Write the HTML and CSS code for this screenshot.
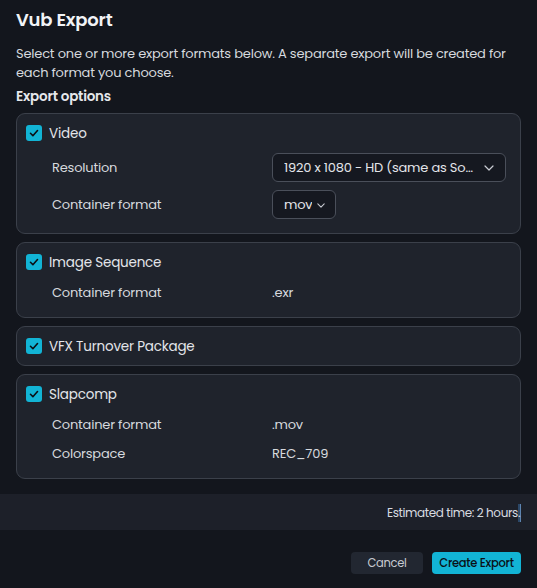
FILE: index.html
```html
<!DOCTYPE html>
<html lang="en">

<head>
    <meta charset="UTF-8">
    <meta name="viewport" content="width=device-width, initial-scale=1.0">
    <title>Vub Export</title>
    <link rel="stylesheet" href="styles.css">
</head>

<body>
    <div class="dialog">
        <div class="dialog-body">
            <h1 class="title">Vub Export</h1>
            <p class="intro">Select one or more export formats below. A separate export will be created for each format you choose.</p>
            <h2 class="section-title">Export options</h2>

            <div class="option-list">
                <div class="option">
                    <label class="option-head">
                        <span class="check">
                            <svg viewBox="0 0 16 16" width="16" height="16"><path d="M4.5 8.3l2.4 2.4 4.6-5.2" fill="none" stroke="#0b0f14" stroke-width="1.6" stroke-linecap="round" stroke-linejoin="round"/></svg>
                        </span>
                        <span class="option-name">Video</span>
                    </label>
                    <div class="option-rows">
                        <span class="row-label">Resolution</span>
                        <div class="select wide">
                            <span class="select-text">1920 x 1080 - HD (same as Source)</span>
                            <svg class="chevron" viewBox="0 0 10 6" width="10" height="6"><path d="M1 1l4 4 4-4" fill="none" stroke="#c9ccd3" stroke-width="1.2" stroke-linecap="round" stroke-linejoin="round"/></svg>
                        </div>
                        <span class="row-label">Container format</span>
                        <div class="select">
                            <span class="select-text">mov</span>
                            <svg class="chevron" viewBox="0 0 10 6" width="8" height="5"><path d="M1 1l4 4 4-4" fill="none" stroke="#c9ccd3" stroke-width="1.3" stroke-linecap="round" stroke-linejoin="round"/></svg>
                        </div>
                    </div>
                </div>

                <div class="option">
                    <label class="option-head">
                        <span class="check">
                            <svg viewBox="0 0 16 16" width="16" height="16"><path d="M4.5 8.3l2.4 2.4 4.6-5.2" fill="none" stroke="#0b0f14" stroke-width="1.6" stroke-linecap="round" stroke-linejoin="round"/></svg>
                        </span>
                        <span class="option-name">Image Sequence</span>
                    </label>
                    <div class="option-rows">
                        <span class="row-label">Container format</span>
                        <span class="row-value">.exr</span>
                    </div>
                </div>

                <div class="option">
                    <label class="option-head">
                        <span class="check">
                            <svg viewBox="0 0 16 16" width="16" height="16"><path d="M4.5 8.3l2.4 2.4 4.6-5.2" fill="none" stroke="#0b0f14" stroke-width="1.6" stroke-linecap="round" stroke-linejoin="round"/></svg>
                        </span>
                        <span class="option-name">VFX Turnover Package</span>
                    </label>
                </div>

                <div class="option">
                    <label class="option-head">
                        <span class="check">
                            <svg viewBox="0 0 16 16" width="16" height="16"><path d="M4.5 8.3l2.4 2.4 4.6-5.2" fill="none" stroke="#0b0f14" stroke-width="1.6" stroke-linecap="round" stroke-linejoin="round"/></svg>
                        </span>
                        <span class="option-name">Slapcomp</span>
                    </label>
                    <div class="option-rows">
                        <span class="row-label">Container format</span>
                        <span class="row-value">.mov</span>
                        <span class="row-label">Colorspace</span>
                        <span class="row-value">REC_709</span>
                    </div>
                </div>
            </div>
        </div>

        <div class="estimate">Estimated time: 2 hours<span class="caret">.</span></div>

        <div class="actions">
            <button class="btn btn-cancel">Cancel</button>
            <button class="btn btn-primary">Create Export</button>
        </div>
    </div>
</body>

</html>
```

FILE: styles.css
```css
* {
    padding: 0;
    margin: 0;
    box-sizing: border-box;
}

body {
    background: #13161d;
    color: #d3d6dc;
    font-family: "Poppins", "Inter", "Noto Sans", sans-serif;
    font-size: 13px;
    letter-spacing: -0.2px;
}

.dialog-body {
    padding: 8px 16px 0;
}

.title {
    font-size: 18px;
    line-height: 24px;
    font-weight: 600;
    letter-spacing: -0.2px;
    color: #f1f3f6;
}

.intro {
    margin-top: 12px;
    line-height: 19px;
    color: #d6d9de;
}

.section-title {
    margin-top: 5px;
    font-size: 13.5px;
    line-height: 20px;
    font-weight: 600;
    color: #e6e8ec;
}

.option-list {
    margin-top: 6px;
    display: flex;
    flex-direction: column;
    gap: 8px;
}

.option {
    background: #1f232c;
    border: 1px solid #3b404a;
    border-radius: 9px;
    padding: 9px 14px 9px 9px;
}

.option-head {
    display: flex;
    align-items: center;
    gap: 7px;
    height: 20px;
    font-size: 13.5px;
    color: #e3e5ea;
}

.option-name {
    padding-top: 2px;
}

.check {
    width: 16px;
    height: 16px;
    border-radius: 3px;
    background: #12b4d5;
    display: flex;
}

.option-rows {
    margin-top: 10px;
    padding: 0 0 5px 26px;
    display: grid;
    grid-template-columns: 220px minmax(0, 1fr);
    align-items: center;
    row-gap: 8px;
}

.row-label,
.row-value {
    line-height: 20px;
    padding-top: 1px;
    color: #d6d9de;
}

.select {
    justify-self: start;
    min-width: 0;
    height: 29px;
    display: flex;
    align-items: center;
    gap: 5px;
    padding: 1px 10px 0 11px;
    background: #151820;
    border: 1px solid #4a4f5a;
    border-radius: 6px;
    color: #e3e5ea;
}

.select.wide {
    justify-self: stretch;
    gap: 10px;
    padding-right: 11px;
}

.select-text {
    flex: 1;
    min-width: 0;
    white-space: nowrap;
    overflow: hidden;
    text-overflow: ellipsis;
}

.chevron {
    flex-shrink: 0;
}

.estimate {
    margin-top: 15px;
    height: 36px;
    background: #1d2029;
    display: flex;
    align-items: center;
    justify-content: flex-end;
    padding: 2px 16px 0 0;
    font-size: 12px;
    letter-spacing: -0.4px;
    color: #d8dbe0;
}

.caret {
    background: #2c4868;
    border-right: 1px solid #5c84b0;
}

.actions {
    display: flex;
    justify-content: flex-end;
    gap: 9px;
    padding: 22px 16px 0;
}

.btn {
    height: 22px;
    padding-top: 1px;
    border: none;
    border-radius: 4px;
    font-family: inherit;
    font-size: 11.5px;
    letter-spacing: -0.3px;
}

.btn-cancel {
    width: 72px;
    background: #222731;
    color: #c8cbd2;
}

.btn-primary {
    width: 89px;
    background: #12b4d5;
    color: #0b1016;
    font-weight: 500;
}
```
